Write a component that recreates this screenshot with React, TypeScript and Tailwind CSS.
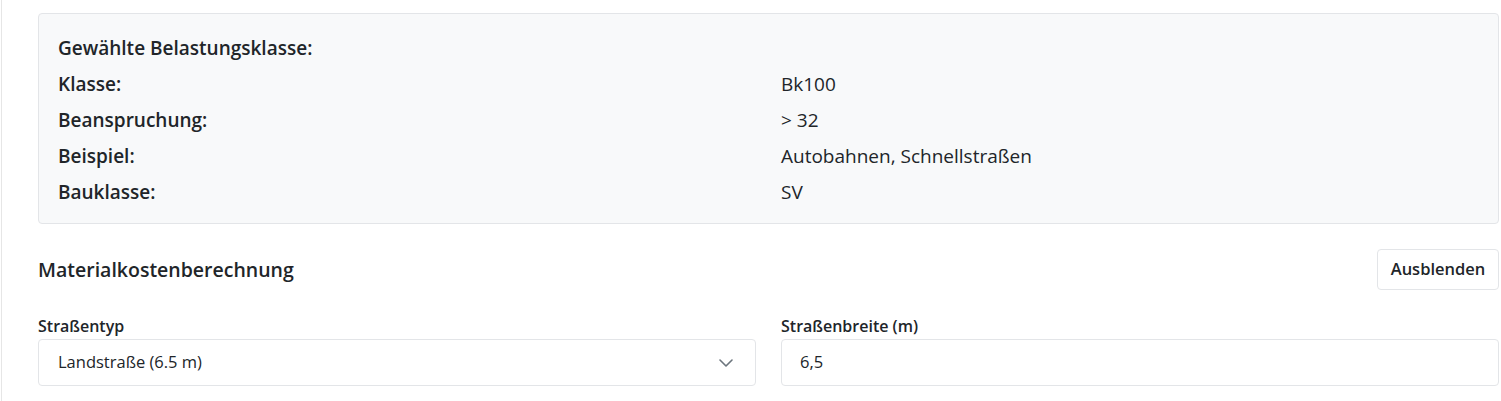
import React from "react";

const rows: [string, string][] = [
  ["Klasse:", "Bk100"],
  ["Beanspruchung:", "> 32"],
  ["Beispiel:", "Autobahnen, Schnellstraßen"],
  ["Bauklasse:", "SV"],
];

export default function App() {
  return (
    <div
      className="w-[1501px] h-[401px] overflow-hidden bg-white text-[#212529]"
      style={{ fontFamily: '"Open Sans", "Noto Sans", sans-serif' }}
    >
      <div className="ml-[1px] h-full border-l border-[#e6e6e6] pl-[36px] pr-[2px] pt-[13px]">
        <div className="h-[211px] rounded-[4px] border border-[#e3e5e8] bg-[#f8f9fa] px-[19px] pt-[16px]">
          <div className="h-[36px] flex items-center text-[19px] font-semibold">
            Gewählte Belastungsklasse:
          </div>
          {rows.map(([k, v]) => (
            <div key={k} className="grid grid-cols-[723px_1fr] h-[36px] items-center text-[19px]">
              <div className="font-semibold">{k}</div>
              <div>{v}</div>
            </div>
          ))}
        </div>

        <div className="mt-[25px] flex items-center justify-between">
          <div className="text-[19.5px] font-semibold">Materialkostenberechnung</div>
          <button className="h-[41px] w-[122px] rounded-[4px] border border-[#e3e5e8] bg-white text-[16.5px] font-semibold">
            Ausblenden
          </button>
        </div>

        <div className="mt-[24px] grid grid-cols-2 gap-x-[25px]">
          <div>
            <div className="h-[24px] flex items-center text-[16px] font-semibold mb-[1px]">Straßentyp</div>
            <div className="h-[47px] rounded-[4px] border border-[#e3e5e8] bg-white flex items-center justify-between pl-[19px] pr-[22px] text-[16.5px]">
              <span>Landstraße (6.5 m)</span>
              <svg width="14" height="8" viewBox="0 0 14 8" fill="none">
                <path d="M1 1l6 6 6-6" stroke="#6c757d" strokeWidth="1.6" strokeLinecap="round" strokeLinejoin="round" />
              </svg>
            </div>
          </div>
          <div>
            <div className="h-[24px] flex items-center text-[16px] font-semibold mb-[1px]">Straßenbreite (m)</div>
            <div className="h-[47px] rounded-[4px] border border-[#e3e5e8] bg-white flex items-center pl-[18px] text-[16.5px]">
              6,5
            </div>
          </div>
        </div>
      </div>
    </div>
  );
}
